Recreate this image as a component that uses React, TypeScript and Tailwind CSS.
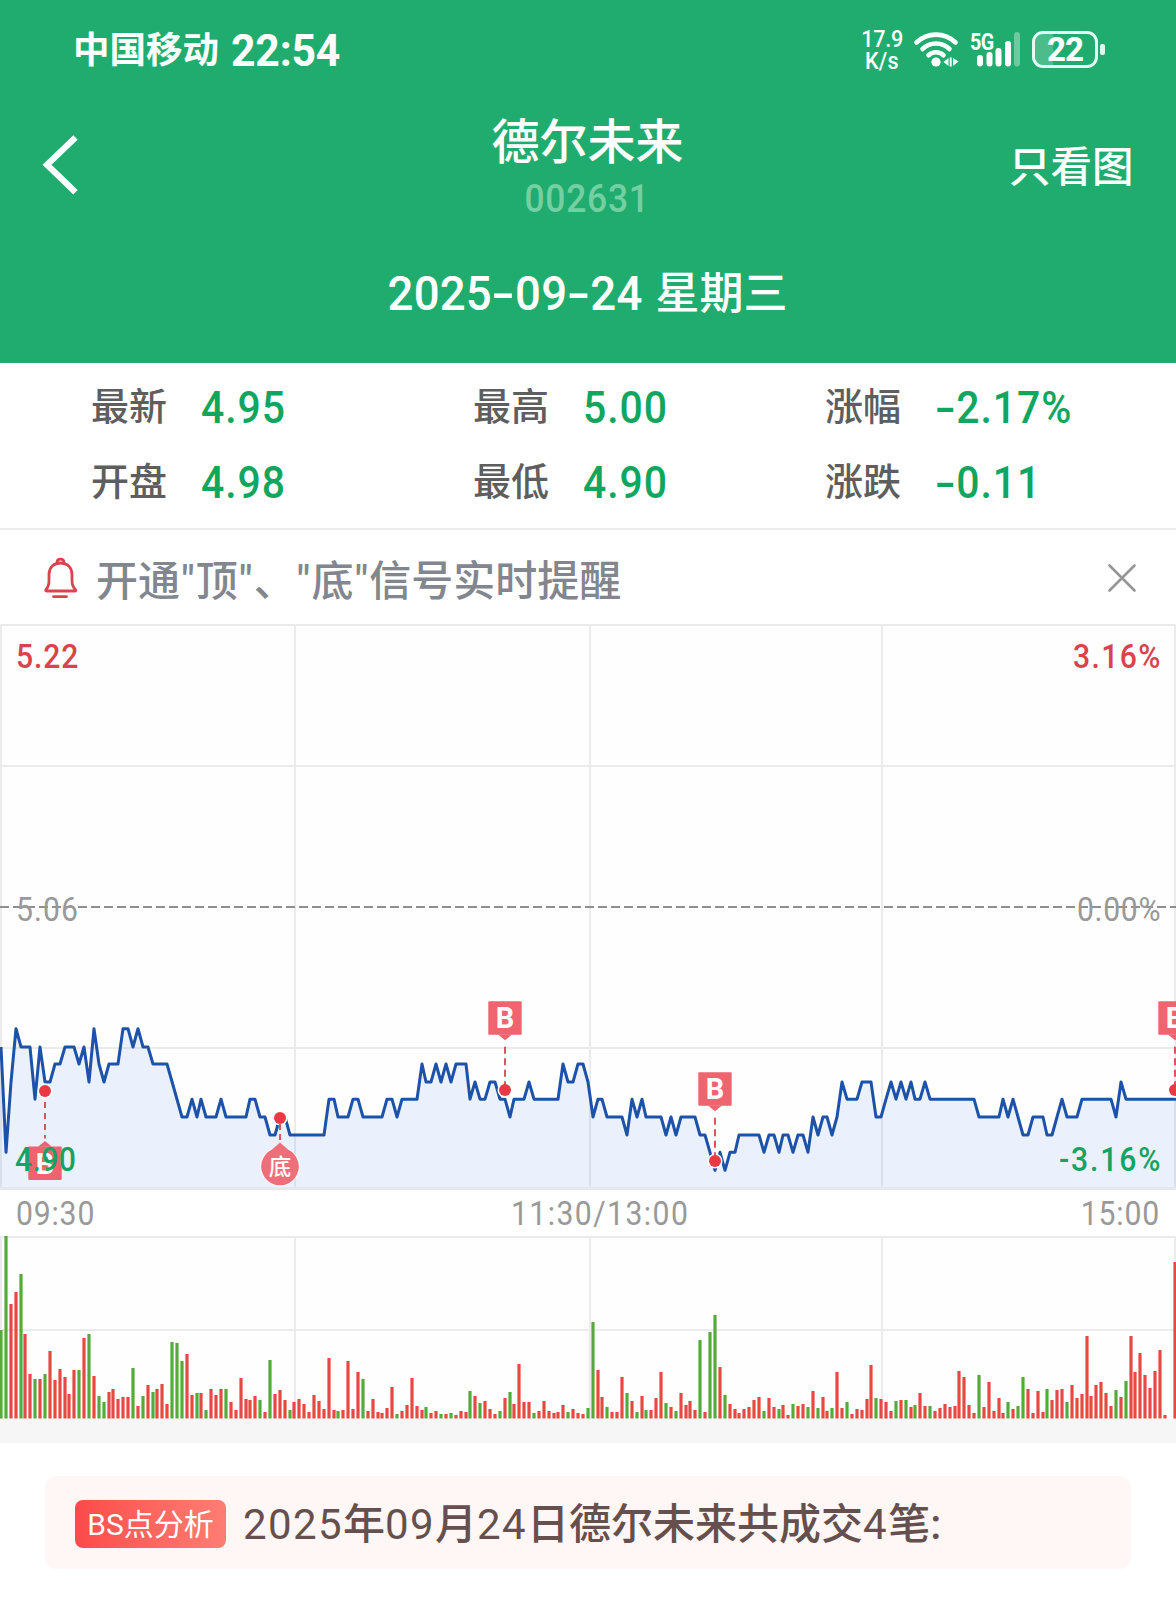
import React from "react";

const LEVELS: Record<string, number> = {
  A: 1028.7, B: 1047, C: 1064, D: 1082, E: 1099.2, F: 1117, G: 1135, H: 1152.3, I: 1170.3,
};

// Price samples per segment: [x origin, "x+level ..."], three units per pixel.
const PRICE: [number, string][] = [
  [0, "3B 18H 33D 48A 63B 90B 105E 120B 135D 150D 165C 180C 195B 222B 237C 252B 267D 282A 297C 312D 327C 354C 369A 384A 399B 414A 429B 444B 459C 501C 546F 561F 576E 591F 603E 618F 648F 663E 678F 738F 750E 765E 780F 795F 810G 825G 840F 855F 870G"],
  [870, "102G 117E 132E 144F 174F 189E 204E 219F 276F 291E 306E 321F 336E 381E 396C 408D 423D 438C 453D 468C 483D 498C 528C 540E 555D 570E 585E 600D 615D 630E 645E 660F 672E 702E 717D 732E 804E 819C 834D 849D 864C"],
  [1740, "9C 24D 39F 54E 66E 81F 126F 141G 156E 171F 186E 198F 243F 258G 273F 288G 303F 345F 360G 375G 390H 405I 420H 435I 450H 465H 477G 537G 552H 567G 582G 597H 609G 624G 639H 654G 669G 684H 699F 714G 729F 741F 756G 771F 786D 801E 831E 846D 873D 888F"],
  [2628, "15F 30E 45D 60E 75D 90E 105D 117E 132E 147D 162E 294E 309F 369F 381E 396F 411E 426F 441G 456G 471F 501F 513G 528G 543F 558E 573F 603F 618E 705E 720F 735D 750E 903E"],
];

// Volume bars per segment: direction, x, top.
const VOLUME: [number, string][] = [
  [0, "g3:330 g18:47 r33:252 r48:216 g63:162 r75:342 r90:462 g105:477 r120:477 g135:462 r150:393 r165:480 r180:447 r195:471 r207:522 r222:450 g237:450 r252:354 g267:342 r282:468 g297:528 g312:546 r327:516 r339:507 r354:537 r369:531 r384:531 g399:444 r414:558 g429:528 r444:495 g459:516 r471:507 r486:492 r501:552 g516:366 g531:369 g546:423 r561:402 r576:525 g591:519 r603:519 g618:570 r633:507 r648:525 r663:507 g678:507 r693:546 r708:570 r723:474 r738:537 r750:540 r765:528 g780:540 r795:576 g810:420 r825:522 r840:510 r855:540 g870:570 r882:546 r897:537"],
  [870, "r42:552 r57:576 r72:525 r87:543 r102:567 r117:414 r132:570 g144:573 r159:570 r174:423 r189:567 r204:456 g219:477 r234:573 r249:537 r264:576 r276:579 r291:564 r306:501 g321:582 r336:573 r351:555 r366:474 r381:558 r396:570 g408:561 r423:579 r438:573 g453:582 r468:582 g483:579 r498:585 r513:573 r528:576 g540:513 r555:528 g570:549 r585:543 r600:567 r615:582 g630:573 r645:534 g660:516 r672:552 r687:432 r702:546 r717:546 g732:579 r747:573 r762:543 r777:573 r792:579 r804:576 r819:555 g834:576 r849:567 r864:579 r879:582 g894:564"],
  [1740, "g39:306 r54:450 r66:531 g81:561 r96:576 r111:576 r126:471 g141:519 r156:543 g171:576 r186:528 g198:570 r213:570 r228:534 r243:456 g258:549 r273:561 g288:573 r303:519 r318:555 r330:543 r345:570 g360:360 r375:576 g390:336 g405:285 r420:441 g435:525 r450:552 r465:567 r477:579 r492:567 r507:561 r522:540 r537:531 g552:573 r567:534 r582:561 g597:567 r609:555 r624:585 g639:552 r654:558 r669:552 g684:561 r699:513 g714:564 r729:531 r741:573 g756:564 r771:456 r786:564 g801:546 r816:582 r831:567 r846:570 r861:537 r873:435 g888:534"],
  [2628, "r15:537 r30:546 r45:573 g60:543 r75:540 g90:540 r105:561 g117:555 r132:519 r147:558 g162:558 r177:573 r192:564 r207:552 r222:561 r237:558 r249:453 r264:471 r279:555 r294:579 g309:465 r324:561 r339:486 r354:573 r369:534 r381:579 g396:546 r411:567 g426:558 g441:471 r456:507 r471:579 r486:513 r501:576 g513:507 r528:540 r543:510 r558:507 g573:546 r588:495 r603:534 r618:522 r633:348 r645:528 r660:495 r675:486 r690:519 r705:558 g720:510 r735:531 g750:483 r765:348 r777:456 r792:399 r807:465 r822:504 r837:453 r852:390 r867:585 r897:126"],
];

const linePoints = PRICE.flatMap(([off, s]) =>
  s.split(" ").map((t) => `${(off + parseInt(t, 10)) / 3},${LEVELS[t.slice(-1)]}`),
).join(" ");

const bars = VOLUME.flatMap(([off, s]) =>
  s.split(" ").map((t) => {
    const [x, y] = t.slice(1).split(":").map(Number);
    return { x: (off + x) / 3, y: 1220 + y / 3, up: t[0] === "r" };
  }),
);

const GRID_X = [1, 295, 590, 882, 1175];

function Dash({ className }: { className: string }) {
  return <span className={`inline-block origin-center ${className}`}>-</span>;
}

function StatusIcons() {
  return (
    <div className="flex items-start text-white">
      <div className="mt-[29px] flex w-[42px] flex-col items-center text-[24px] leading-[21.500px] font-medium">
        <span className="inline-block scale-x-[0.9] tracking-[-0.300px]">17.9</span>
        <span className="inline-block scale-x-[0.9] tracking-[0.300px]">K/s</span>
      </div>
      <svg className="ml-[9px] mt-[30px]" width="48" height="40" viewBox="912 30 48 40" fill="none">
        <g stroke="#fff" strokeWidth="4.6" strokeLinecap="round">
          <path d="M916.5 42.5a28 28 0 0 1 39 0" />
          <path d="M922.5 49a19.5 19.5 0 0 1 27 0" />
          <path d="M928.5 55.2a11 11 0 0 1 15 0" />
        </g>
        <circle cx="936" cy="62" r="4.6" fill="#fff" />
        <path d="M943.500 62l5-4v8zM949.700 57.500h2v9h-2zM953 58l5.500 3.500-5.500 4.500z" fill="#fff" />
      </svg>
      <div className="relative ml-[8px] mt-[30px] h-[40px] w-[54px]">
        <span className="absolute left-[2px] top-0 origin-left scale-x-[0.82] text-[24px] leading-[24px] font-bold tracking-[-0.800px]">5G</span>
        <svg className="absolute inset-0" width="54" height="40" viewBox="968 30 54 40">
          <g fill="#fff">
            <rect x="977" y="55" width="6" height="11.500" rx="3" />
            <rect x="986.500" y="52" width="6" height="14.500" rx="3" />
            <rect x="995.500" y="48" width="6" height="18.500" rx="3" />
            <rect x="1005" y="41" width="6" height="25.500" rx="3" />
            <rect x="1014" y="32" width="6" height="34.500" rx="3" opacity="0.35" />
          </g>
        </svg>
      </div>
      <div className="mt-[31px] ml-[10px] flex items-center gap-[2px]">
        <div className="relative flex h-[37px] w-[66px] items-center justify-center overflow-hidden rounded-[11px] border-[3px] border-[#e6fff4]">
          <div className="absolute inset-y-0 left-0 w-[18px] bg-white/20" />
          <span className="relative text-[33px] leading-[32px] font-extrabold tracking-[-1px]">22</span>
        </div>
        <div className="h-[11px] w-[5px] rounded-[2px] bg-[#dff8ec]" />
      </div>
    </div>
  );
}

function Header() {
  return (
    <header className="h-[363px] bg-[#21ac6f] text-white">
      <div className="flex h-[100px] items-start justify-between pl-[73px] pr-[71px]">
        <div className="flex items-center pt-[25px] leading-[52px] font-bold">
          <span className="text-[36.500px]">中国移动</span>
          <span className="ml-[12px] origin-left scale-x-[0.95] text-[45px] tracking-[-0.200px]">22:54</span>
        </div>
        <StatusIcons />
      </div>
      <div className="flex h-[130px] items-center justify-between pl-[42px] pr-[43px]">
        <svg width="124" height="60" viewBox="42 135 124 60" fill="none">
          <path d="M75.500 137.500L47 164.700l28.500 27.500" stroke="#fff" strokeWidth="6.200" />
        </svg>
        <div className="flex flex-col items-center pt-[8px]">
          <h1 className="text-[48px] leading-[60px] font-medium">德尔未来</h1>
          <span className="scale-x-[0.92] text-[38.500px] leading-[52px] font-medium tracking-[0.800px] text-[#74cfa2]">002631</span>
        </div>
        <button className="w-[124px] pt-[5px] text-[41.500px] leading-[60px] font-medium whitespace-nowrap">只看图</button>
      </div>
      <div className="flex items-center justify-center pt-[34px] leading-[60px] font-medium">
        <span className="-mx-[10px] scale-x-[0.93] text-[49px] tracking-[0.200px]">
          2025<Dash className="mx-[4px] scale-x-150" />09<Dash className="mx-[4px] scale-x-150" />24
        </span>
        <span className="ml-[13px] text-[44px]">星期三</span>
      </div>
    </header>
  );
}

const STATS = [
  { w: "w-[382px]", g: "ml-[34px]", rows: [["最新", "4.95"], ["开盘", "4.98"]] },
  { w: "w-[352px]", g: "ml-[34px]", rows: [["最高", "5.00"], ["最低", "4.90"]] },
  { w: "flex-1", g: "ml-[35px]", rows: [["涨幅", "-2.17%"], ["涨跌", "-0.11"]] },
];

function Stats() {
  return (
    <section className="flex h-[167px] border-b-2 border-[#ececec] pl-[91px] pt-[6px]">
      {STATS.map((col) => (
        <div key={col.rows[0][0]} className={col.w}>
          {col.rows.map(([label, value]) => (
            <div key={label} className="flex h-[75px] items-center">
              <span className="text-[38px] leading-[60px] font-medium text-[#5e5e5e]">{label}</span>
              <span className={`origin-left scale-x-[0.92] pt-[3px] text-[44.500px] leading-[60px] font-medium tracking-[1px] text-[#10a65f] ${col.g}`}>
                {value[0] === "-" ? <><Dash className="ml-[3px] mr-[3px] scale-x-150" />{value.slice(1)}</> : value}
              </span>
            </div>
          ))}
        </div>
      ))}
    </section>
  );
}

function Notice() {
  return (
    <section className="flex h-[94px] items-center pl-[43px] pr-[39px]">
      <svg className="mt-[2px]" width="35" height="44" viewBox="43 556 35 44" fill="none" stroke="#da4450" strokeWidth="2.800" strokeLinecap="round" strokeLinejoin="round">
        <path d="M46 589.500c2.500-2.500 3-5 3-9v-6c0-7 4.500-11.500 11.500-11.500s11.500 4.500 11.500 11.500v6c0 4 .5 6.500 3.500 9 .7 1 .2 1.500-.8 1.500h-28c-1 0-1.500-.5-.7-1.500z" />
        <path d="M57 562.500c0-4.500 7-4.500 7 0M53.500 596.700h13" />
      </svg>
      <span className="ml-[18px] flex-1 pt-[9px] text-[42px] leading-[60px] font-medium text-[#82868e]">
        开通<i className="mx-[1.200px] not-italic">"</i>顶<i className="mx-[1.200px] not-italic">"</i>、<i className="mx-[1.200px] not-italic">"</i>底<i className="mx-[1.200px] not-italic">"</i>信号实时提醒
      </span>
      <svg className="mt-[2px]" width="30" height="30" viewBox="0 0 30 30" stroke="#959595" strokeWidth="2.600" strokeLinecap="round">
        <path d="M2.500 2.500l25 25M27.500 2.500l-25 25" />
      </svg>
    </section>
  );
}

function BuyMarker({ x, y, dot, below }: { x: number; y: number; dot: number; below?: boolean }) {
  return (
    <g>
      <circle cx={x} cy={dot} r="7.500" fill="#fff" />
      <line x1={x} x2={x} y1={below ? dot + 11 : y + 45.500} y2={below ? y - 8 : dot - 4} stroke="#d95560" strokeWidth="2" strokeDasharray={below ? "6 5" : "7 4.500"} />
      <circle cx={x} cy={dot} r="6" fill="#eb3943" />
      <g opacity="0.92">
        <rect x={x - 16.700} y={y} width="33.400" height="33.400" rx="1" fill="#ef5763" />
        <path d={below ? `M${x - 7} ${y + 0.2}L${x} ${y - 5.500}L${x + 7} ${y + 0.2}z` : `M${x - 7} ${y + 33.200}L${x} ${y + 39}L${x + 7} ${y + 33.200}z`} fill="#ef5763" />
      </g>
      <text x={x} y={y + 27} textAnchor="middle" fontSize="29" fontWeight="700" fill="#fff">B</text>
    </g>
  );
}

function ChartLabel({ x, y, width, children }: { x: number; y: number; width: number; children: string }) {
  return <text transform={`translate(${x} ${y}) scale(0.9 1)`} textLength={width / 0.9}>{children}</text>;
}

function PriceChart() {
  return (
    <svg className="block" width="1176" height="566" viewBox="0 624 1176 566">
      <rect x="0" y="624" width="1176" height="566" fill="#fefefe" />
      <g stroke="#ebebeb" strokeWidth="2">
        {GRID_X.map((x) => <line key={x} x1={x} x2={x} y1="624" y2="1189" />)}
        {[625, 766, 1048].map((y) => <line key={y} x1="0" x2="1176" y1={y} y2={y} />)}
      </g>
      <polygon points={`0,1189 0,1047 ${linePoints} 1177,1189`} fill="#3b7cf5" fillOpacity="0.1" />
      <line x1="0" x2="1176" y1="1188.500" y2="1188.500" stroke="#e6e8ee" strokeWidth="3" />
      <line x1="0" x2="1176" y1="907" y2="907" stroke="#8f8f8f" strokeWidth="2" strokeDasharray="9 4" />
      <polyline points={linePoints} fill="none" stroke="#1c52a8" strokeWidth="3" strokeLinejoin="round" />
      <BuyMarker x={45} y={1146.500} dot={1091} below />
      <BuyMarker x={505} y={1001.300} dot={1090} />
      <BuyMarker x={715} y={1072.300} dot={1161} />
      <BuyMarker x={1175} y={1001.300} dot={1090} />
      <g>
        <circle cx="280" cy="1118" r="7.500" fill="#fff" />
        <circle cx="280" cy="1118" r="6" fill="#eb3943" />
        <line x1="280" x2="280" y1="1124" y2="1140" stroke="#d95560" strokeWidth="2" strokeDasharray="6 4" />
        <circle cx="280" cy="1166.500" r="19.800" fill="#fff" opacity="0.7" />
        <path d="M280 1142.500l8 7a18.800 18.800 0 1 1-16 0z" fill="#ee6f79" />
        <text x="280" y="1174.500" textAnchor="middle" fontSize="22.500" fontWeight="500" fill="#fff">底</text>
      </g>
      <g fontSize="33.500" fontWeight="500">
        <g fill="#d8434c">
          <ChartLabel x={16} y={668.3} width={62.5}>5.22</ChartLabel>
          <ChartLabel x={1073} y={668.3} width={87.5}>3.16%</ChartLabel>
        </g>
        <g fill="#999" fontWeight="400">
          <ChartLabel x={16} y={921} width={62}>5.06</ChartLabel>
          <ChartLabel x={1077} y={921} width={83.5}>0.00%</ChartLabel>
        </g>
        <g fill="#14a361">
          <ChartLabel x={15} y={1171.3} width={61}>4.90</ChartLabel>
          <ChartLabel x={1059} y={1171.3} width={101.5}>-3.16%</ChartLabel>
        </g>
      </g>
    </svg>
  );
}

function TimeAxis() {
  return (
    <div className="flex h-[46px] items-center justify-between pl-[16px] pr-[16px] pt-[1px] text-[33.500px] leading-[43px] text-[#999]">
      <span className="origin-left scale-x-90 tracking-[0.900px]">09:30</span>
      <span className="origin-center translate-x-[12px] scale-x-90 tracking-[1.600px]">11:30/13:00</span>
      <span className="origin-right scale-x-90 tracking-[0.900px]">15:00</span>
    </div>
  );
}

function VolumeChart() {
  return (
    <svg className="block" width="1176" height="183" viewBox="0 1236 1176 183">
      <rect x="0" y="1236" width="1176" height="183" fill="#fefefe" />
      <g stroke="#ebebeb" strokeWidth="2">
        {GRID_X.map((x) => <line key={x} x1={x} x2={x} y1="1236" y2="1419" />)}
        {[1237, 1330].map((y) => <line key={y} x1="0" x2="1176" y1={y} y2={y} />)}
      </g>
      {bars.map((b) => (
        <line key={b.x} x1={b.x} x2={b.x} y1={b.y} y2="1418.500" stroke={b.up ? "#e64842" : "#54ab3a"} strokeWidth="3.200" />
      ))}
    </svg>
  );
}

function Digits({ children }: { children: string }) {
  return <span className="font-normal tracking-[1.400px]">{children}</span>;
}

export default function App() {
  return (
    <main className="h-[1602px] w-[1176px] overflow-hidden bg-white font-['Roboto','Noto_Sans_CJK_SC',sans-serif]">
      <Header />
      <Stats />
      <Notice />
      <PriceChart />
      <TimeAxis />
      <VolumeChart />
      <div className="h-[24px] bg-[#f6f6f6]" />
      <section className="mx-[45px] mt-[33px] flex h-[93px] items-center rounded-[12px] bg-[#fef7f6] pl-[30px]">
        <span className="mt-[2px] flex h-[48px] w-[151px] items-center justify-center rounded-[8px] bg-linear-to-r from-[#fb4a4a] to-[#ff7d73] pt-[2px] text-[30px] leading-[46px] text-white">BS点分析</span>
        <span className="ml-[17px] pt-[4px] whitespace-nowrap text-[42px] leading-[60px] font-medium text-[#66504e]">
          <Digits>2025</Digits>年<Digits>09</Digits>月<Digits>24</Digits>日德尔未来共成交<Digits>4</Digits>笔:
        </span>
      </section>
    </main>
  );
}
